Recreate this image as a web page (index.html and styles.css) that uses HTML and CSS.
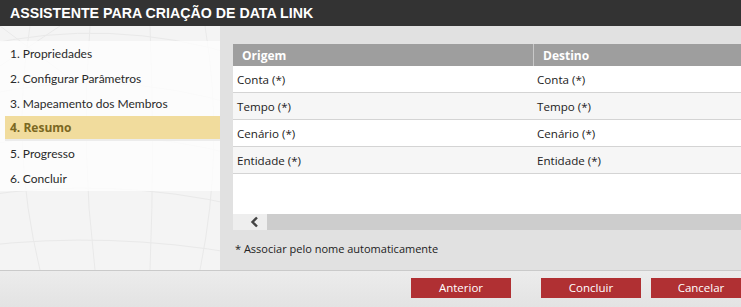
FILE: index.html
```html
<!DOCTYPE html>
<html lang="pt">
<head>
<meta charset="utf-8">
<title>Assistente para criação de Data Link</title>
<link rel="stylesheet" href="styles.css">
</head>
<body>
<div class="window">
  <div class="header">ASSISTENTE PARA CRIAÇÃO DE DATA LINK</div>
  <div class="main">
    <div class="sidebar">
      <svg class="globe" width="220" height="244" viewBox="0 0 220 244" aria-hidden="true">
        <g fill="none" stroke="#e9e9e9" stroke-width="1">
          <path d="M-20 20 Q110 -10 240 30"/>
          <path d="M-20 70 Q110 40 240 80"/>
          <path d="M-20 120 Q110 95 240 130"/>
          <path d="M-20 170 Q110 150 240 180"/>
          <path d="M-20 220 Q110 205 240 228"/>
          <path d="M30 0 Q10 120 40 244"/>
          <path d="M90 0 Q80 120 95 244"/>
          <path d="M150 0 Q155 120 150 244"/>
          <path d="M205 0 Q225 120 200 244"/>
          <path d="M0 0 L80 60"/>
          <path d="M60 0 L0 40"/>
        </g>
      </svg>
      <ul class="steps">
        <li class="step">1. Propriedades</li>
        <li class="step">2. Configurar Parâmetros</li>
        <li class="step">3. Mapeamento dos Membros</li>
        <li class="step active">4. Resumo</li>
        <li class="step">5. Progresso</li>
        <li class="step">6. Concluir</li>
      </ul>
    </div>
    <div class="content">
      <div class="grid">
        <div class="grid-head">
          <div class="col col-a">Origem</div>
          <div class="col col-b">Destino</div>
        </div>
        <div class="grid-body">
          <div class="row"><div class="cell col-a">Conta (*)</div><div class="cell col-b">Conta (*)</div></div>
          <div class="row alt"><div class="cell col-a">Tempo (*)</div><div class="cell col-b">Tempo (*)</div></div>
          <div class="row"><div class="cell col-a">Cenário (*)</div><div class="cell col-b">Cenário (*)</div></div>
          <div class="row alt"><div class="cell col-a">Entidade (*)</div><div class="cell col-b">Entidade (*)</div></div>
        </div>
        <div class="hscroll">
          <div class="scroll-btn">
            <svg width="12" height="12" viewBox="0 0 12 12" aria-hidden="true"><path d="M8 1.5 L3.5 6 L8 10.5" fill="none" stroke="#444" stroke-width="2.4"/></svg>
          </div>
          <div class="scroll-track"></div>
        </div>
      </div>
      <div class="note">* Associar pelo nome automaticamente</div>
    </div>
  </div>
  <div class="footer">
    <button class="btn btn-prev">Anterior</button>
    <button class="btn btn-finish">Concluir</button>
    <button class="btn btn-cancel">Cancelar</button>
  </div>
</div>
</body>
</html>
```

FILE: styles.css
```css
html, body {
  margin: 0;
  padding: 0;
}
body {
  width: 741px;
  height: 307px;
  overflow: hidden;
  font-family: "Open Sans", "Noto Sans", sans-serif;
  color: #333;
  background: #e1e1e1;
}
.window {
  display: flex;
  flex-direction: column;
  width: 741px;
  height: 307px;
}
.header {
  flex: none;
  height: 26px;
  line-height: 26px;
  background: #333333;
  color: #ffffff;
  font-family: "Liberation Sans", Arial, sans-serif;
  font-weight: bold;
  font-size: 14.2px;
  padding-left: 10px;
  white-space: nowrap;
}
.main {
  flex: none;
  display: flex;
  height: 244px;
}
.sidebar {
  position: relative;
  width: 220px;
  flex: none;
  background: #f4f4f4;
  overflow: hidden;
}
.globe {
  position: absolute;
  left: 0;
  top: 0;
}
.steps {
  position: relative;
  list-style: none;
  margin: 15px 0 0 0;
  padding: 0;
  background: rgba(255, 255, 255, 0.75);
}
.step {
  height: 25px;
  line-height: 25px;
  margin-left: 5px;
  padding-left: 5px;
  font-family: Lato, "Open Sans", sans-serif;
  font-size: 12px;
  color: #2a2a2a;
  white-space: nowrap;
}
.step.active {
  height: 23px;
  line-height: 23px;
  background: #f1dc9d;
  color: #7b6822;
  font-family: "Open Sans", sans-serif;
  font-weight: bold;
  font-size: 12px;
  border-bottom: 2px solid #ececec;
}
.content {
  flex: 1;
  min-width: 0;
  background: #e1e1e1;
  padding: 18px 0 0 13px;
  overflow: hidden;
}
.grid {
  width: 620px;
}
.grid-head {
  display: flex;
  height: 22px;
  background: #9e9e9e;
  color: #fff;
  font-weight: bold;
  font-size: 12px;
  line-height: 24px;
  overflow: hidden;
}
.grid-head .col {
  padding-left: 9px;
  box-sizing: border-box;
}
.col-a {
  width: 300px;
}
.col-b {
  width: 320px;
}
.grid-head .col-b {
  border-left: 1px solid #c9c9c9;
}
.grid-body {
  height: 148px;
  background: #ffffff;
}
.row {
  display: flex;
  height: 26px;
  line-height: 28px;
  border-bottom: 1px solid #d4d4d4;
  font-size: 11.6px;
  color: #222;
  background: #ffffff;
  overflow: hidden;
}
.row.alt {
  background: #f6f6f6;
}
.cell {
  padding-left: 4px;
  box-sizing: border-box;
  white-space: nowrap;
}
.hscroll {
  display: flex;
  height: 16px;
}
.scroll-btn {
  width: 34px;
  background: #eeeeee;
  display: flex;
  align-items: center;
  padding-left: 16px;
  box-sizing: border-box;
}
.scroll-track {
  flex: 1;
  background: #cdcdcd;
}
.note {
  margin-top: 12px;
  margin-left: 2px;
  font-size: 11px;
  line-height: 14px;
  color: #222;
  white-space: nowrap;
}
.footer {
  flex: none;
  height: 29px;
  border-top: 1px solid #cacaca;
  background: linear-gradient(#ececec, #e3e3e3);
  display: flex;
  align-items: flex-start;
  padding-top: 7px;
}
.btn {
  width: 100px;
  height: 20px;
  flex: none;
  border: none;
  padding: 0;
  background: #b03033;
  color: #ffffff;
  font-family: "Open Sans", "Noto Sans", sans-serif;
  font-size: 11.5px;
  line-height: 20px;
}
.btn-prev {
  margin-left: 411px;
}
.btn-finish {
  margin-left: 30px;
}
.btn-cancel {
  margin-left: 10px;
}
```
